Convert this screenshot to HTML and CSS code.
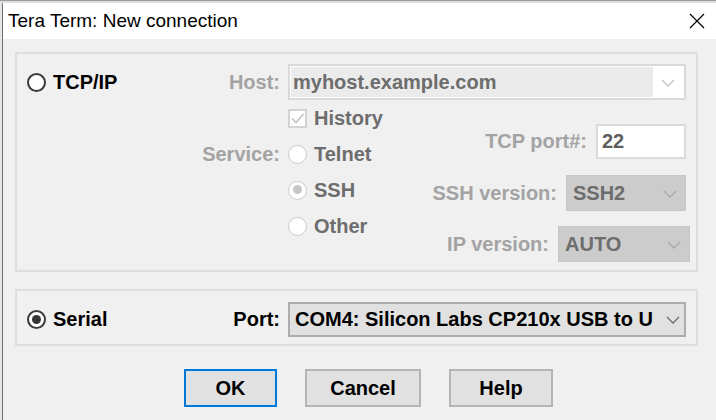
FILE: index.html
```html
<!DOCTYPE html>
<html>
<head>
<meta charset="utf-8">
<title>Tera Term: New connection</title>
<link rel="stylesheet" href="styles.css">
</head>
<body>
<div class="screen">
  <div class="topline"></div>
  <div class="dialog">
    <div class="titlebar">
      <span class="title">Tera Term: New connection</span>
      <svg class="close" width="16" height="16" viewBox="0 0 16 16"><path d="M1 1 L15 15 M15 1 L1 15" stroke="#000" stroke-width="1.2" fill="none"/></svg>
    </div>
    <div class="content">
      <div class="group tcp">
        <div class="row-grid host-row">
          <div class="lead">
            <span class="radio"><span class="circle"></span><span class="rtext">TCP/IP</span></span>
            <span class="dis">Host:</span>
          </div>
          <div class="combo host-combo">
            <span class="field">myhost.example.com</span>
            <span class="arrow"><svg width="14" height="8" viewBox="0 0 14 8"><path d="M1 1 L7 7 L13 1" stroke="#c4c4c4" stroke-width="1.3" fill="none"/></svg></span>
          </div>
        </div>
        <div class="lower">
          <div class="service">
            <span></span>
            <span class="opt"><span class="check"><svg width="15" height="15" viewBox="0 0 15 15"><path d="M2 7.5 L6 11.5 L13.5 3" stroke="#c3c3c3" stroke-width="1.6" fill="none"/></svg></span>History</span>
            <span class="dis slabel">Service:</span>
            <span class="opt"><span class="circle off"></span>Telnet</span>
            <span></span>
            <span class="opt"><span class="circle off on"></span>SSH</span>
            <span></span>
            <span class="opt"><span class="circle off"></span>Other</span>
          </div>
          <div class="settings">
            <div class="setting port-row">
              <span class="dis">TCP port#:</span>
              <span class="input">22</span>
            </div>
            <div class="setting ssh-row">
              <span class="dis">SSH version:</span>
              <span class="combo gray ssh">
                <span class="field">SSH2</span>
                <span class="arrow"><svg width="14" height="8" viewBox="0 0 14 8"><path d="M1 1 L7 7 L13 1" stroke="#a9a9a9" stroke-width="1.3" fill="none"/></svg></span>
              </span>
            </div>
            <div class="setting ip-row">
              <span class="dis">IP version:</span>
              <span class="combo gray ip">
                <span class="field">AUTO</span>
                <span class="arrow"><svg width="14" height="8" viewBox="0 0 14 8"><path d="M1 1 L7 7 L13 1" stroke="#a9a9a9" stroke-width="1.3" fill="none"/></svg></span>
              </span>
            </div>
          </div>
        </div>
      </div>
      <div class="group serial">
        <div class="row-grid serial-row">
          <div class="lead">
            <span class="radio"><span class="circle on"></span><span class="rtext">Serial</span></span>
            <span class="lbl">Port:</span>
          </div>
          <div class="combo port-combo">
            <span class="field">COM4: Silicon Labs CP210x USB to U</span>
            <span class="arrow"><svg width="14" height="8" viewBox="0 0 14 8"><path d="M1 1 L7 7 L13 1" stroke="#6e6e6e" stroke-width="1.3" fill="none"/></svg></span>
          </div>
        </div>
      </div>
      <div class="buttons">
        <button class="btn ok">OK</button>
        <button class="btn cancel">Cancel</button>
        <button class="btn help">Help</button>
      </div>
    </div>
  </div>
</div>
</body>
</html>
```
FILE: styles.css
```css
* { box-sizing: border-box; }
html, body { margin: 0; padding: 0; }
body {
  width: 716px;
  height: 420px;
  overflow: hidden;
  background: #e6e6e6;
  font-family: "Liberation Sans", Arial, sans-serif;
}
.screen {
  height: 420px;
  padding-left: 2px;
  background: #e6e6e6;
  display: flex;
  flex-direction: column;
}
.topline {
  height: 3px;
  border-top: 1px solid #9a9a9a;
  margin-left: -2px;
  background: #dedede;
}
.dialog {
  flex: 1;
  border-left: 1px solid #6f6f6f;
  background: #f0f0f0;
  display: flex;
  flex-direction: column;
}
.titlebar {
  height: 36px;
  background: #ffffff;
  display: flex;
  align-items: center;
  justify-content: space-between;
  padding: 0 11px 0 5px;
  font-size: 19px;
  color: #000;
}
.title { padding-bottom: 1px; }
.content {
  padding: 13px 18px 0 12px;
  font-size: 20px;
  font-weight: bold;
  color: #000;
}
.group {
  border: 2px solid #dedede;
}
.tcp { height: 220px; }
.serial {
  margin-top: 17px;
  height: 57px;
  padding-top: 11px;
}
.row-grid {
  display: grid;
  grid-template-columns: 263px 398px;
  column-gap: 8px;
  align-items: center;
}
.host-row { margin-top: 10px; height: 36px; }
.serial-row { height: 35px; }
.lead {
  display: flex;
  align-items: center;
  justify-content: space-between;
  padding-left: 10px;
}
.radio { display: flex; align-items: center; }
.rtext { margin-left: 7px; }
.dis { color: #a3a3a3; }
.lbl { color: #000; }

.circle {
  display: inline-block;
  width: 19px;
  height: 19px;
  border-radius: 50%;
  border: 2px solid #3a3a3a;
  background: #fff;
  position: relative;
  flex: none;
}
.circle.on::after {
  content: "";
  position: absolute;
  left: 3px;
  top: 3px;
  width: 9px;
  height: 9px;
  border-radius: 50%;
  background: #333;
}
.circle.off {
  border: 1.5px solid #cbcbcb;
}
.circle.off.on::after {
  left: 3.5px;
  top: 3.5px;
  background: #c6c6c6;
}

.combo {
  display: flex;
  align-items: stretch;
  height: 36px;
}
.combo .field {
  flex: 1;
  display: flex;
  align-items: center;
  white-space: nowrap;
  overflow: hidden;
}
.combo .arrow {
  width: 30px;
  display: flex;
  align-items: center;
  justify-content: center;
  padding-top: 1px;
}
.host-combo {
  border: 2px solid #d9d9d9;
  background: #fff;
  padding: 1px;
}
.host-combo .field {
  background: #ebebeb;
  color: #6d6d6d;
  padding-left: 2px;
}
.port-combo {
  height: 35px;
  border: 2px solid #adadad;
  background: #e1e1e1;
}
.port-combo .field { padding-left: 5px; overflow: visible; }
.port-combo .arrow { width: 26px; padding-left: 4px; }

.lower {
  display: flex;
}
.service {
  display: grid;
  grid-template-columns: 263px auto;
  grid-auto-rows: 36px;
  column-gap: 8px;
  align-items: center;
}
.slabel { justify-self: end; }
.opt {
  display: flex;
  align-items: center;
  color: #6d6d6d;
}
.opt .circle { margin-right: 7px; }
.check {
  width: 19px;
  height: 19px;
  border: 2px solid #d3d3d3;
  background: #fff;
  display: flex;
  align-items: center;
  justify-content: center;
  margin-right: 7px;
}
.settings {
  flex: 1;
  display: flex;
  flex-direction: column;
  align-items: flex-end;
  padding: 24px 10px 0 0;
}
.setting {
  display: flex;
  align-items: center;
  gap: 9px;
}
.port-row { height: 35px; }
.ssh-row { margin-top: 16px; }
.ip-row { margin-top: 15px; margin-right: -4px; }
.input {
  width: 90px;
  height: 35px;
  border: 2px solid #dadada;
  background: #fff;
  color: #5e5e5e;
  display: flex;
  align-items: center;
  padding-left: 4px;
}
.combo.gray {
  background: #cccccc;
  border: 1px solid #c6c6c6;
  color: #6d6d6d;
}
.combo.gray .field { padding-left: 6px; }
.ssh { width: 120px; }
.ip { width: 132px; }

.buttons {
  display: flex;
  gap: 28px;
  margin-top: 23px;
  padding-left: 169px;
}
.btn {
  height: 38px;
  font-family: "Liberation Sans", Arial, sans-serif;
  font-size: 20px;
  font-weight: bold;
  color: #000;
  background: #e1e1e1;
  border: 2px solid #b4b4b4;
  padding: 0;
}
.ok { width: 93px; border-color: #0078d7; }
.cancel { width: 116px; }
.help { width: 104px; }
```
